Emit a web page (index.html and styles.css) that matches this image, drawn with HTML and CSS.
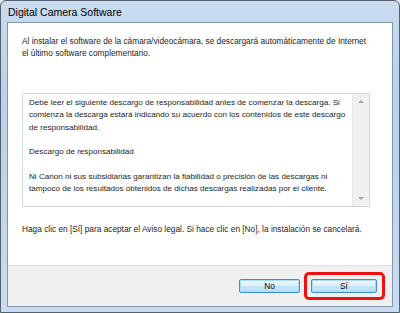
FILE: index.html
```html
<!DOCTYPE html>
<html lang="es">
<head>
  <meta charset="UTF-8" />
  <title>Digital Camera Software</title>
  <link rel="stylesheet" href="styles.css">
</head>
<body>

  <div class="window">
    <div class="titlebar">Digital Camera Software</div>

    <div class="client">
      <div class="content">
        <p class="intro">Al instalar el software de la cámara/videocámara, se descargará automáticamente de Internet el último software complementario.</p>

        <div class="textbox">
          <div class="textbox-text">
            <p>Debe leer el siguiente descargo de responsabilidad antes de comenzar la descarga. Si comienza la descarga estará indicando su acuerdo con los contenidos de este descargo de responsabilidad.</p>
            <p>Descargo de responsabilidad</p>
            <p>Ni Canon ni sus subsidiarias garantizan la fiabilidad o precisión de las descargas ni tampoco de los resultados obtenidos de dichas descargas realizadas por el cliente.</p>
          </div>
          <div class="scrollbar">
            <span class="arrow up"></span>
            <span class="arrow down"></span>
          </div>
        </div>

        <p class="notice">Haga clic en [Sí] para aceptar el Aviso legal. Si hace clic en [No], la instalación se cancelará.</p>
      </div>

      <div class="footer">
        <button class="btn">No</button>
        <div class="highlight">
          <button class="btn btn-yes">Sí</button>
        </div>
      </div>
    </div>
  </div>

</body>
</html>
```

FILE: styles.css
```css
body {
  margin: 0;
  background: #e8ecf0;
  font-family: 'Liberation Sans', Arial, sans-serif;
  font-size: 8.3px;
  color: #1e1e1e;
}
.window {
  width: 400px;
  height: 313px;
  box-sizing: border-box;
  border: 1px solid #55606e;
  border-radius: 6px 6px 0 0;
  background: linear-gradient(180deg, #c9dcf0 0%, #b9d1eb 30%, #bfd5ec 60%, #cadcef 100%);
  padding: 0 6px 5px 6px;
  display: flex;
  flex-direction: column;
}
.titlebar {
  height: 21px;
  line-height: 23px;
  font-size: 10.5px;
  color: #000;
  padding-left: 1px;
}
.client {
  flex: 1;
  border: 1px solid #8297ae;
  background: #fff;
  display: flex;
  flex-direction: column;
}
.content {
  flex: 1;
  padding: 12px 14px 0 14px;
}
.content p {
  margin: 0;
  line-height: 12px;
}
.intro {
  width: 350px;
}
.textbox {
  margin-top: 34px;
  height: 114px;
  width: 348px;
  border: 1px solid #d4d9de;
  box-sizing: border-box;
  display: flex;
}
.textbox-text {
  flex: 1;
  padding: 3px 1px 0 6px;
  font-size: 8.1px;
}
.textbox-text p {
  margin-bottom: 12.5px !important;
  line-height: 12.3px !important;
}
.scrollbar {
  width: 16px;
  background: #f0f0f0;
  border-left: 1px solid #e6e6e6;
  display: flex;
  flex-direction: column;
  justify-content: space-between;
  align-items: center;
  padding: 6px 0;
}
.arrow {
  width: 0;
  height: 0;
  border-left: 3px solid transparent;
  border-right: 3px solid transparent;
}
.arrow.up {
  border-bottom: 3px solid #a8a8a8;
}
.arrow.down {
  border-top: 3px solid #a8a8a8;
}
.notice {
  margin-top: 16px !important;
}
.footer {
  height: 40px;
  background: #f0f0f0;
  border-top: 1px solid #dfdfdf;
  display: flex;
  justify-content: flex-end;
  align-items: center;
  padding-right: 7px;
  gap: 4px;
}
.btn {
  width: 61px;
  height: 14px;
  border: 1px solid #3c8fd0;
  border-radius: 2px;
  background: linear-gradient(180deg, #eef8fe 0%, #dbf0fc 50%, #c3e5fa 51%, #b9e0f8 100%);
  font-family: 'Liberation Sans', sans-serif;
  font-size: 8.3px;
  color: #000;
  padding: 0;
  box-shadow: inset 0 0 0 1px #aedcf8;
}
.btn-yes {
  width: 66px;
}
.highlight {
  border: 3px solid #ee1111;
  border-radius: 5px;
  padding: 4px 5px 4px 4px;
  display: flex;
}
```
